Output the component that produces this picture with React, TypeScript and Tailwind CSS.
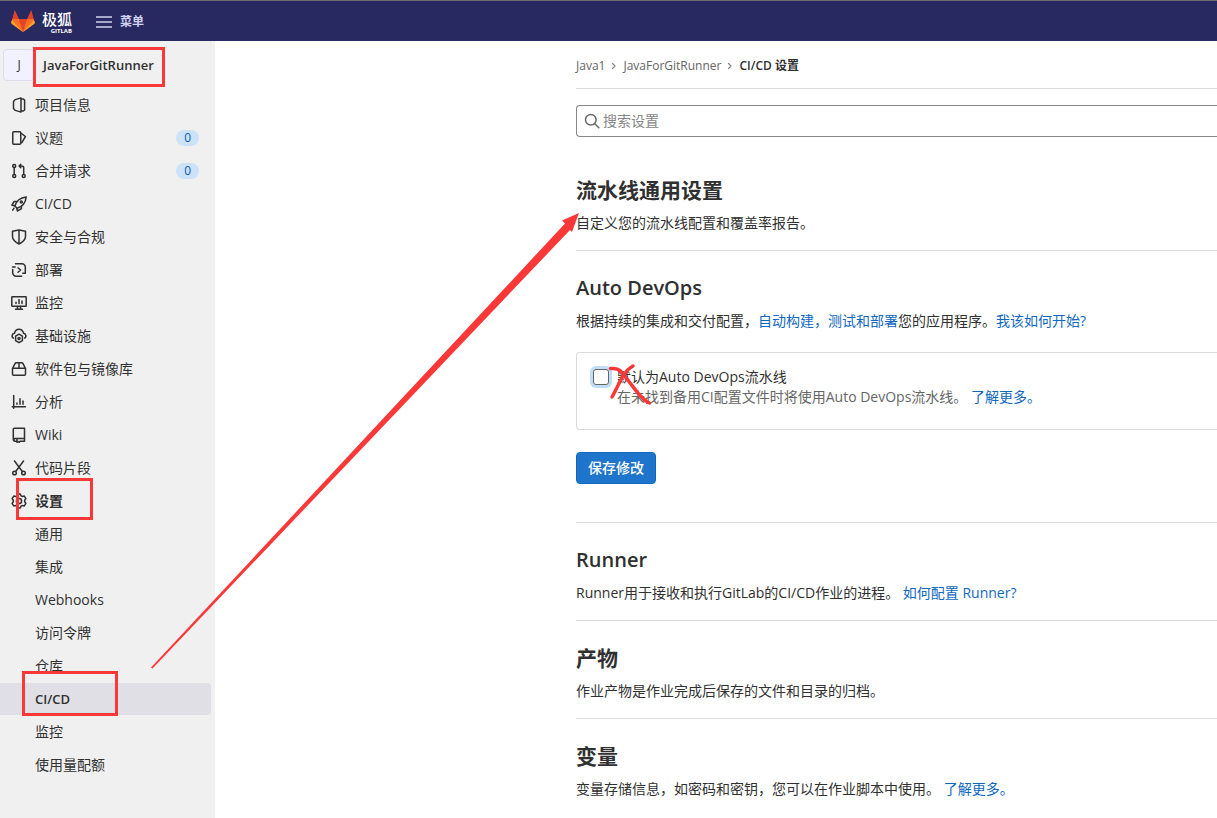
import type { ReactNode } from "react";

const stroke = {
  fill: "none",
  stroke: "currentColor",
  strokeWidth: 1.5,
  strokeLinecap: "round" as const,
  strokeLinejoin: "round" as const,
};

function Icon({ children, className = "size-4 shrink-0" }: { children: ReactNode; className?: string }) {
  return (
    <svg viewBox="0 0 16 16" className={className} aria-hidden="true" {...stroke}>
      {children}
    </svg>
  );
}

const icons = {
  project: (
    <>
      <path d="M10 .9 4.300 2.600 2.500 4.500v7l1.800 1.900L10 15.100z" />
      <path d="M10.300 2h2l1.300 1.100v9.800L12.300 14h-2" />
    </>
  ),
  issues: (
    <>
      <rect x="1.75" y="1.75" width="8" height="12.5" rx="1" />
      <path d="m10.500 3.500 3.900 3-3.700 6.300" />
    </>
  ),
  merge: (
    <>
      <circle cx="3.200" cy="3" r="1.500" />
      <circle cx="3.200" cy="13" r="1.500" />
      <circle cx="12.700" cy="13" r="1.500" />
      <path d="M3.200 4.800v6.400M12.700 11.200V5a2 2 0 0 0-2-2H8.500M9.800 1.200 8.100 3l1.700 1.800" />
    </>
  ),
  rocket: (
    <>
      <path d="M6 12.2 3.9 10C5.2 5.2 8.8 1.6 15.2.9c-.6 6.2-4.200 10-9.200 11.300Z" />
      <path d="M5.500 5.500H3.200L.9 9.200l2.900.6M10.400 10.400v2.300l-4 2.300-.6-2.700M3 12.200l-1.300 2" />
      <circle cx="10.300" cy="5.900" r="1" />
    </>
  ),
  shield: (
    <path d="M8 1 1.500 2.300v5.200c0 3.200 2.800 5.500 6.500 7.600 3.700-2.100 6.500-4.400 6.500-7.600V2.300zM8 1v14" />
  ),
  deploy: (
    <>
      <path d="M1.700 7.400v3.400a3.400 3.400 0 0 0 3.400 3.400h5.600M14.300 11V5.200a3.400 3.400 0 0 0-3.400-3.400H4.500M1.500 5h2.700M14.300 11.300h-2.500" />
      <path d="m7 5.700 2.600 2.300L7 10.300" />
    </>
  ),
  monitor: (
    <>
      <rect x=".8" y="1.800" width="14.400" height="9.400" rx=".5" />
      <path d="M5 7.200v1.200M8 4.600v3.800M11 6v2.400M6.500 11.500v2.300M9.500 11.500v2.300M4.500 14.200h7" />
    </>
  ),
  cloud: (
    <>
      <path d="M2.300 10.200a2.700 2.700 0 0 1 1.100-4.900C4 2.700 5.700 1.200 8 1.200s4 1.500 4.600 4.100a2.700 2.700 0 0 1 1.100 4.900" />
      <path d="m8 6.200 3.400 2v4.500L8 14.700l-3.400-2V8.200z" />
      <circle cx="8" cy="10.400" r="1" />
    </>
  ),
  box: (
    <path d="M1.500 7.500 4 2.700c.3-.6.700-.9 1.300-.9h5.400c.6 0 1 .3 1.300.9l2.500 4.800v5.700a1 1 0 0 1-1 1h-11a1 1 0 0 1-1-1zM1.500 7.300h13M8 2v5" />
  ),
  chart: <path d="M2.700 1.500v12.800M1.200 12.800h13.200M6 9v1.200M9 4.800v5.400M12 7v3.200" />,
  book: (
    <path d="M5 14.200H3.800a1.500 1.500 0 0 1-1.500-1.500V2.300a1 1 0 0 1 1-1h10.200v10.200H3.800a1.400 1.400 0 0 0 0 2.700M9 14.200h4.500v-2.700M6 12v3.300l1.200-.8 1.200.8" />
  ),
  scissors: (
    <>
      <circle cx="3.500" cy="13" r="1.800" />
      <circle cx="12.500" cy="13" r="1.800" />
      <path d="m3.500 1 7.800 10.500M12.500 1 4.700 11.500" />
    </>
  ),
  gear: (
    <>
      <path d="M6.700.9h2.600l.7 1.900 1.200.6 2.100-.3 1.600 2.500-1.200 1.700v1.400l1.200 1.700-1.600 2.500-2.100-.3-1.200.6-.7 1.900H6.700L6 13.200l-1.200-.6-2.100.3-1.600-2.500 1.200-1.700V7.300L1.100 5.600l1.600-2.500 2.100.3L6 2.800z" />
      <circle cx="8" cy="8" r="2.600" />
    </>
  ),
};

const navItems: { label: string; icon: keyof typeof icons; count?: number; current?: boolean }[] = [
  { label: "项目信息", icon: "project" },
  { label: "议题", icon: "issues", count: 0 },
  { label: "合并请求", icon: "merge", count: 0 },
  { label: "CI/CD", icon: "rocket" },
  { label: "安全与合规", icon: "shield" },
  { label: "部署", icon: "deploy" },
  { label: "监控", icon: "monitor" },
  { label: "基础设施", icon: "cloud" },
  { label: "软件包与镜像库", icon: "box" },
  { label: "分析", icon: "chart" },
  { label: "Wiki", icon: "book" },
  { label: "代码片段", icon: "scissors" },
  { label: "设置", icon: "gear", current: true },
];

const subItems = ["通用", "集成", "Webhooks", "访问令牌", "仓库", "CI/CD", "监控", "使用量配额"];

function Header() {
  return (
    <header className="flex h-[41px] items-center border-t border-[#6b6b6b] bg-[#292961] pl-[11px] text-[#d1d1f0]">
      <a href="#" className="flex items-center gap-[7px] text-white" aria-label="极狐 GitLab">
        <svg viewBox="0 0 24 24" className="size-6" aria-hidden="true">
          <path fill="#e24329" d="M12 23 23.600 13.300 20.300 1 16 10H8L3.700 1 .4 13.300z" />
          <path fill="#fc6d26" d="M12 23 8 10H1.400L.4 13.300zM12 23l4-13h6.600l1 3.300z" />
          <path fill="#fca326" d="M12 23 1.100 11 .2 13.200c-.2.700 0 1.400.6 1.900zM12 23l10.900-12 .9 2.200c.2.700 0 1.400-.6 1.900z" />
        </svg>
        <span className="flex flex-col items-end pt-[2px]">
          <span className="text-[15px] leading-[18px] font-medium">极狐</span>
          <span className="text-[6px] leading-[6px] font-bold">GITLAB</span>
        </span>
      </a>
      <button type="button" className="ml-6 flex items-center gap-2 pt-px text-xs font-bold">
        <svg viewBox="0 0 16 12" className="h-3 w-4" aria-hidden="true">
          <path d="M0 1h16M0 6h16M0 11h16" stroke="currentColor" strokeWidth="1.500" />
        </svg>
        菜单
      </button>
    </header>
  );
}

function Sidebar() {
  return (
    <nav className="w-[215px] shrink-0 bg-[#f0f0f0] pr-1" aria-label="项目导航">
      <a href="#" className="mt-2 mb-2 flex h-8 items-center gap-2 pl-[3px] text-[13px] font-semibold">
        <span className="flex size-8 items-center justify-center rounded-sm border border-[#dcdcee] bg-[#f1f1ff] text-xs font-normal">
          J
        </span>
        JavaForGitRunner
      </a>
      <ul className="flex flex-col gap-px">
        {navItems.map((item) => (
          <li key={item.label}>
            <a
              href="#"
              className={`flex h-8 items-center gap-2 pr-3 pl-[11px] ${item.current ? "font-semibold" : ""}`}
            >
              <Icon>{icons[item.icon]}</Icon>
              <span className="grow">{item.label}</span>
              {item.count !== undefined && (
                <span className="rounded-full bg-[#cbe2f9] px-2 text-xs leading-4 text-[#0b5cad]">{item.count}</span>
              )}
            </a>
          </li>
        ))}
        {subItems.map((label) => (
          <li key={label}>
            <a
              href="#"
              className={`flex h-8 items-center rounded-r pl-[35px] ${
                label === "CI/CD" ? "bg-[#e0dfe5] text-[13px] font-semibold" : ""
              }`}
            >
              {label}
            </a>
          </li>
        ))}
      </ul>
    </nav>
  );
}

function Chevron() {
  return (
    <svg viewBox="0 0 8 8" className="mx-[5px] size-2 text-[#868686]" aria-hidden="true" {...stroke} strokeWidth={1.2}>
      <path d="m2.500 1.500 2.500 2.500-2.500 2.500" />
    </svg>
  );
}

function Link({ children }: { children: ReactNode }) {
  return (
    <a href="#" className="text-[#1068bf]">
      {children}
    </a>
  );
}

type SectionProps = {
  title: string;
  titleSize?: "text-xl" | "text-[21px]";
  children: ReactNode;
  extra?: ReactNode;
};

function Section({ title, titleSize = "text-[21px]", children, extra }: SectionProps) {
  return (
    <section className="border-b border-[#dbdbdb] pt-[23px] pb-[17px] last:border-b-0">
      <h4 className={`font-semibold ${titleSize}`}>
        <span className="block leading-7">{title}</span>
      </h4>
      <p className="mt-[9px] leading-5">{children}</p>
      {extra}
    </section>
  );
}

function AutoDevOpsForm() {
  return (
    <form>
      <div className="mt-[21px] flex items-start gap-2 rounded-l border border-r-0 border-[#dbdbdb] pt-[14px] pb-[22px] pl-4">
        <input
          id="auto-devops"
          type="checkbox"
          className="mt-[2px] size-4 shrink-0 appearance-none rounded-[3px] border border-[#666] bg-white ring-3 ring-[#bfdcfb]"
        />
        <div className="leading-5">
          <label htmlFor="auto-devops" className="block">
            默认为Auto DevOps流水线
          </label>
          <p className="text-[#666]">
            在未找到备用CI配置文件时将使用Auto DevOps流水线。 <Link>了解更多。</Link>
          </p>
        </div>
      </div>
      <button
        type="button"
        className="mt-[22px] mb-[21px] flex h-8 items-center rounded border border-[#1068bf] bg-[#1f75cb] px-[11px] font-medium text-white"
      >
        保存修改
      </button>
    </form>
  );
}

function Annotations() {
  return (
    <svg width="700" height="740" className="pointer-events-none absolute top-0 left-0" aria-hidden="true">
      <g fill="none" stroke="#fb3838" strokeWidth="3">
        <rect x="34.500" y="48.500" width="129" height="37" />
        <rect x="17.500" y="479.500" width="74" height="39" />
        <rect x="23.500" y="672.500" width="93" height="42" />
        <path
          d="M610.500 368.500c4-.3 7.500 0 10 2.500 3.500 3.500 5 6.500 8 10 4 5 8 10.500 12 15 3 3.500 5.500 5.500 9 7M633 366c-4 2-7 5.500-10 10-4 7-7 14-11 21"
          strokeWidth="3.500"
          strokeLinecap="round"
          strokeLinejoin="round"
        />
      </g>
      <path fill="#fb3838" d="M151 667.500 565 223.500l-3-3 17-7.500-7 19-2-2L152.500 668.500z" />
    </svg>
  );
}

export default function App() {
  return (
    <div className="relative flex min-h-screen flex-col overflow-x-hidden bg-white font-['Open_Sans','Noto_Sans_CJK_SC',sans-serif] text-sm text-[#303030]">
      <Header />
      <div className="flex grow">
        <Sidebar />
        <main className="ml-[361px] min-w-0 grow">
          <nav className="flex h-12 items-center border-b border-[#dbdbdb] pt-[2px] text-xs text-[#666]" aria-label="面包屑">
            <a href="#">Java1</a>
            <Chevron />
            <a href="#">JavaForGitRunner</a>
            <Chevron />
            <a href="#" className="font-semibold text-[#303030]">
              CI/CD 设置
            </a>
          </nav>
          <label className="mt-4 flex h-8 items-center gap-[3px] rounded-l border border-r-0 border-[#868686] pl-[7px] text-[#666]">
            <Icon>
              <circle cx="6.800" cy="6.800" r="5.300" />
              <path d="m10.800 10.800 4 4" />
            </Icon>
            <input
              type="search"
              aria-label="搜索设置"
              placeholder="搜索设置"
              className="min-w-0 grow text-[#303030] outline-none placeholder:text-[#868686]"
            />
          </label>
          <div className="pt-4">
            <Section title="流水线通用设置">自定义您的流水线配置和覆盖率报告。</Section>
            <Section title="Auto DevOps" titleSize="text-xl" extra={<AutoDevOpsForm />}>
              根据持续的集成和交付配置，<Link>自动构建，测试和部署</Link>您的应用程序。<Link>我该如何开始?</Link>
            </Section>
            <Section title="Runner" titleSize="text-xl">
              Runner用于接收和执行GitLab的CI/CD作业的进程。 <Link>如何配置 Runner?</Link>
            </Section>
            <Section title="产物">作业产物是作业完成后保存的文件和目录的归档。</Section>
            <Section title="变量">
              变量存储信息，如密码和密钥，您可以在作业脚本中使用。 <Link>了解更多。</Link>
            </Section>
          </div>
        </main>
      </div>
      <Annotations />
    </div>
  );
}
